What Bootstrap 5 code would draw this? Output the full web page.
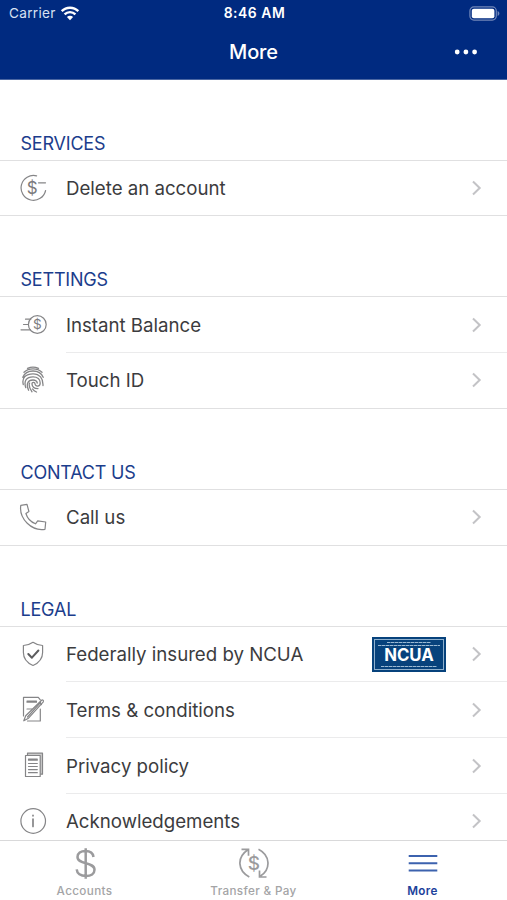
<!DOCTYPE html>
<html lang="en">
<head>
<meta charset="utf-8">
<meta name="viewport" content="width=device-width, initial-scale=1">
<title>More</title>
<link href="https://cdn.jsdelivr.net/npm/bootstrap@5.3.0/dist/css/bootstrap.min.css" rel="stylesheet">
<style>
  body { font-family: Inter, "Liberation Sans", sans-serif; color: #3c3c3e; background: #fff; }
  .app { height: 900px; overflow: hidden; }
  .top-area { height: 80px; background: #002a80; color: #fff; border-bottom: 1px solid #4a66a2; }
  .status { height: 27px; font-size: 13.6px; line-height: 27px; padding: 0 7px 0 9px; }
  .status .side { flex: 1 1 0; }
  .carrier { color: #d9e1f2; letter-spacing: .3px; }
  .clock { font-weight: 600; font-size: 13.9px; letter-spacing: .55px; }
  .title-row { height: 51px; padding: 0 29px; }
  .title-row .side { flex: 1 1 0; }
  .title-row h1 { font-size: 20px; font-weight: 500; line-height: 51px; letter-spacing: -.1px; }
  .title-row svg { position: relative; top: -1px; }
  .section-title { height: 80px; font-size: 18px; font-weight: 400; color: #1b3d8c; line-height: 22px; padding: 0 0 5px 20.5px; letter-spacing: -.2px; }
  .section-title.first { height: 79.5px; }
  .rows { border-top: 1px solid #e0e0e1; border-bottom: 1px solid #e0e0e1; }
  .entry { height: 54.8px; padding-left: 19px; }
  .entry + .entry { height: 55.8px; }
  .entry .glyph { width: 28px; height: 28px; flex: none; margin-right: 19px; }
  .entry .body-part { padding-right: 25px; font-size: 18.7px; letter-spacing: -.02px; }
  .entry .body-part > span { padding-top: 2px; }
  .entry + .entry .body-part { border-top: 1px solid #ebebec; }
  .glyph { fill: none; stroke: #858587; stroke-width: 1.2; stroke-linecap: round; stroke-linejoin: round; }
  .glyph text { fill: #7b7b7d; stroke: none; text-anchor: middle; font-family: Inter, sans-serif; }
  .glyph.fine { stroke-width: 1.3; }
  .glyph .tick { stroke: #5c5c5e; stroke-width: 2; }
  .glyph .info { stroke-width: 1.7; }
  .chev { fill: none; stroke: #c3c3c6; stroke-width: 2; }
  .seal { width: 74px; height: 35px; background: #07427c; padding: 2px; margin-right: 25px; }
  .seal-in { border: 1px solid #8fb0cd; color: #fff; position: relative; height: 31px; }
  .seal-in b { font-size: 16.8px; line-height: 31px; letter-spacing: -.1px; font-weight: 700; }
  .seal-in i { position: absolute; height: 1px; background: repeating-linear-gradient(90deg, #9bb9d3 0 3px, #4f7ca6 3px 4px); }
  .seal-in .l1 { top: 2px; left: 12px; right: 12px; }
  .seal-in .l2 { top: 5px; left: 3px; right: 3px; }
  .seal-in .l3 { bottom: 2px; left: 6px; right: 6px; }
  .tabs { height: 60px; border-top: 1px solid #d9d9da; background: #fff; font-size: 11.7px; font-weight: 500; color: #a4a4a6; letter-spacing: .35px; }
  .tabs .tab { flex: 1 1 0; padding-top: 5px; line-height: 16px; }
  .tabs .tab svg { width: 34px; height: 34px; margin-bottom: 3px; }
  .tabs .on { color: #1d429b; font-weight: 600; }
</style>
</head>
<body>
<div class="app d-flex flex-column">
  <header class="top-area flex-shrink-0">
    <div class="status d-flex align-items-center">
      <div class="side d-flex align-items-center carrier">Carrier
        <svg class="ms-1" width="20" height="15" viewBox="0 0 20 15" fill="none" stroke="#fff" stroke-width="2.4"><path d="M1.7 5.2a11.7 11.7 0 0 1 16.6 0M4.6 8.4a7.6 7.6 0 0 1 10.8 0"/><path d="M10 14.2 6.9 11.1a4.4 4.4 0 0 1 6.2 0z" fill="#fff" stroke="none"/></svg>
      </div>
      <div class="clock">8:46 AM</div>
      <div class="side d-flex justify-content-end">
        <svg width="31" height="15" viewBox="0 0 31 15"><rect x=".9" y=".9" width="26.4" height="13.2" rx="4" fill="none" stroke="#7187b8" stroke-width="1.2"/><rect x="2.8" y="2.7" width="22.6" height="9.6" rx="2" fill="#fff"/><path d="M28.6 5v5c1.1-.4 1.8-1.4 1.8-2.5S29.7 5.4 28.6 5z" fill="#7187b8"/></svg>
      </div>
    </div>
    <div class="title-row d-flex align-items-center">
      <div class="side"></div>
      <h1 class="m-0">More</h1>
      <div class="side d-flex justify-content-end">
        <svg width="24" height="6" viewBox="0 0 24 6" fill="#fff"><circle cx="3.2" cy="3" r="2.4"/><circle cx="11.9" cy="3" r="2.4"/><circle cx="20.6" cy="3" r="2.4"/></svg>
      </div>
    </div>
  </header>

  <main class="flex-grow-1 overflow-hidden">
    <h2 class="section-title first m-0 d-flex align-items-end">SERVICES</h2>
    <div class="rows">
      <div class="entry d-flex align-items-center">
        <svg class="glyph" viewBox="0 0 28 28"><path d="M17.6 1.9A12.4 12.4 0 1 0 26.6 16.5M19.5 8.8h7"/><text x="13.2" y="20.2" font-size="17">$</text></svg>
        <div class="body-part d-flex align-items-center flex-grow-1 h-100"><span class="me-auto">Delete an account</span><svg class="chev" width="11" height="16" viewBox="0 0 11 16"><path d="m2 1.5 6.7 6.5L2 14.5"/></svg></div>
      </div>
    </div>

    <h2 class="section-title m-0 d-flex align-items-end">SETTINGS</h2>
    <div class="rows">
      <div class="entry d-flex align-items-center">
        <svg class="glyph" viewBox="0 0 28 28"><circle cx="18.3" cy="13.5" r="8.9"/><path d="M6.500 8.200h5.300M4.500 13.500H9M2 18.800h9.500"/><text x="18.300" y="18.200" font-size="13.500">$</text></svg>
        <div class="body-part d-flex align-items-center flex-grow-1 h-100"><span class="me-auto">Instant Balance</span><svg class="chev" width="11" height="16" viewBox="0 0 11 16"><path d="m2 1.5 6.7 6.5L2 14.5"/></svg></div>
      </div>
      <div class="entry d-flex align-items-center">
        <svg class="glyph fine" viewBox="0 0 28 28"><path d="M8.500 2.300c3.500-1.400 7.500-1.400 11 0M5 6.200c5-4.400 13-4.400 18 0M3.800 11.300C7.300 2.900 20.700 2.900 24.200 11.300M4.300 18.500C2.500 11.500 7 7.800 14 7.800c6.500 0 10.300 4.500 10 11.700M6.800 21.700C4.500 15 7.500 10.800 14 10.800c4.500 0 7.200 2.700 7.200 6.200 0 4-5 4-5.200.8-.1-2-3.200-2-3 .3.200 2.700 2.500 4.500 6 4.500M9.600 24.200C6.800 18 8.800 14 14 14c2.300 0 3.900 1.200 4.300 3M13 25.800c-2.500-3.500-3.400-6.500-2.400-8.700M17.500 26c-1.800-.7-3-1.600-3.900-3"/></svg>
        <div class="body-part d-flex align-items-center flex-grow-1 h-100"><span class="me-auto">Touch ID</span><svg class="chev" width="11" height="16" viewBox="0 0 11 16"><path d="m2 1.5 6.7 6.5L2 14.5"/></svg></div>
      </div>
    </div>

    <h2 class="section-title m-0 d-flex align-items-end">CONTACT US</h2>
    <div class="rows">
      <div class="entry d-flex align-items-center">
        <svg class="glyph" viewBox="0 0 28 28"><path d="M1.8 2.300 8 1.300l1.900 7.200-3 2c1.400 4.700 5 8.500 9.600 10.300l2.200-2.900 8 1.100-.7 7.300C13 28.500-.3 16 1.800 2.300z"/></svg>
        <div class="body-part d-flex align-items-center flex-grow-1 h-100"><span class="me-auto">Call us</span><svg class="chev" width="11" height="16" viewBox="0 0 11 16"><path d="m2 1.5 6.7 6.5L2 14.5"/></svg></div>
      </div>
    </div>

    <h2 class="section-title m-0 d-flex align-items-end">LEGAL</h2>
    <div class="rows">
      <div class="entry d-flex align-items-center">
        <svg class="glyph" viewBox="0 0 28 28"><path d="M14 2.300c2.700 2 6 3 9.600 3.200v7c0 6-3.600 10.300-9.600 13-6-2.700-9.600-7-9.600-13v-7C8 5.300 11.300 4.300 14 2.300z"/><path class="tick" d="m9.300 14 3.600 3.700 6.500-7.200"/></svg>
        <div class="body-part d-flex align-items-center flex-grow-1 h-100"><span class="me-auto">Federally insured by NCUA</span>
          <div class="seal"><div class="seal-in d-flex justify-content-center"><i class="l1"></i><i class="l2"></i><b>NCUA</b><i class="l3"></i></div></div>
          <svg class="chev" width="11" height="16" viewBox="0 0 11 16"><path d="m2 1.5 6.7 6.5L2 14.5"/></svg></div>
      </div>
      <div class="entry d-flex align-items-center">
        <svg class="glyph" viewBox="0 0 28 28"><path d="M4.500 21V2.300h14.800l2 2.500M21.300 14v12H8.500M8 6.200h9.500M8 7.200h9.500M8 14h5"/><path fill="#fff" d="M22.600 5.200c1-.8 2.300.3 1.700 1.600L9.500 23.200l-4.700 2.600 1.900-5z"/><path d="m20.500 7.800 2 1.700M8.500 22 21.500 7.500"/></svg>
        <div class="body-part d-flex align-items-center flex-grow-1 h-100"><span class="me-auto">Terms &amp; conditions</span><svg class="chev" width="11" height="16" viewBox="0 0 11 16"><path d="m2 1.5 6.7 6.5L2 14.5"/></svg></div>
      </div>
      <div class="entry d-flex align-items-center">
        <svg class="glyph" viewBox="0 0 28 28"><path d="M8.500 4V2.200h15v21h-2" fill="#ccc"/><path fill="#fff" d="M6.500 4.500h14.700v21H6.500z"/><path d="M9.500 8.200h8.800M9.500 9.200h8.800M9.500 12.500h8.800M9.500 15.500h8.800M9.500 18.600h8.800M9.500 21.700h8.800"/></svg>
        <div class="body-part d-flex align-items-center flex-grow-1 h-100"><span class="me-auto">Privacy policy</span><svg class="chev" width="11" height="16" viewBox="0 0 11 16"><path d="m2 1.5 6.7 6.5L2 14.5"/></svg></div>
      </div>
      <div class="entry d-flex align-items-center">
        <svg class="glyph" viewBox="0 0 28 28"><circle cx="14.2" cy="14" r="12.3"/><path class="info" d="M14 12v7.500M14 8.300v.5"/></svg>
        <div class="body-part d-flex align-items-center flex-grow-1 h-100"><span class="me-auto">Acknowledgements</span><svg class="chev" width="11" height="16" viewBox="0 0 11 16"><path d="m2 1.5 6.7 6.5L2 14.5"/></svg></div>
      </div>
    </div>
  </main>

  <nav class="tabs d-flex text-center flex-shrink-0">
    <div class="tab d-flex flex-column align-items-center">
      <svg viewBox="0 0 34 34" fill="none" stroke="#9b9b9d" stroke-width="2.5"><path d="M25.500 11c-.5-4-3.500-6-8-6-4.800 0-8 2.300-8 6 0 8 17 4.500 17 12.800 0 4-3.500 6.200-8.500 6.200-5.500 0-9-2.600-9.300-6.600M17.700 2.200v30.500"/></svg>
      <span>Accounts</span>
    </div>
    <div class="tab d-flex flex-column align-items-center">
      <svg viewBox="0 0 34 34" fill="none" stroke="#9b9b9d" stroke-width="1.7"><path d="M12.300 31C.5 24.500-.3 11.500 10.500 4M4.500 3.300h7v6.500M21.500 3.300c12 6.200 12.500 20 2 26.700M29.500 31h-7v-6.500"/><text x="17" y="23.500" font-size="19" text-anchor="middle" fill="#9b9b9d" stroke="none" font-family="Inter, sans-serif">$</text></svg>
      <span>Transfer &amp; Pay</span>
    </div>
    <div class="tab on d-flex flex-column align-items-center">
      <svg viewBox="0 0 34 34" fill="none" stroke="#3c62ae" stroke-width="2"><path d="M2.700 10h28.600M2.700 17.300h28.600M2.700 24.600h28.600"/></svg>
      <span>More</span>
    </div>
  </nav>
</div>
<script src="https://cdn.jsdelivr.net/npm/bootstrap@5.3.0/dist/js/bootstrap.bundle.min.js"></script>
</body>
</html>
